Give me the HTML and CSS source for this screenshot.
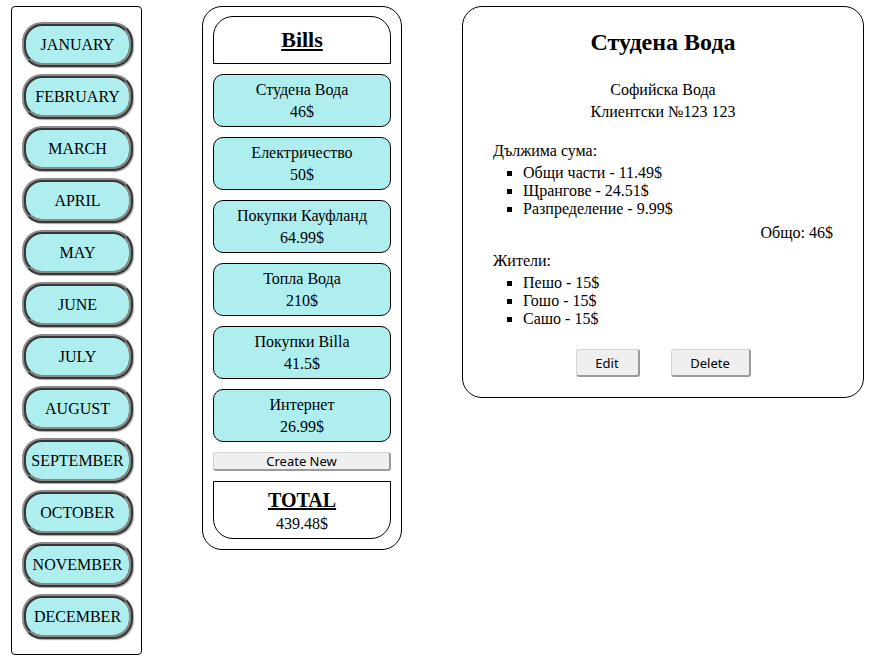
FILE: index.html
```html
<!DOCTYPE html>
<html>
<head>
<meta charset="utf-8">
<link rel="stylesheet" href="styles.css">
</head>
<body>
<div class="page">
  <nav class="months">
    <button class="month">JANUARY</button>
    <button class="month">FEBRUARY</button>
    <button class="month">MARCH</button>
    <button class="month">APRIL</button>
    <button class="month">MAY</button>
    <button class="month">JUNE</button>
    <button class="month">JULY</button>
    <button class="month">AUGUST</button>
    <button class="month">SEPTEMBER</button>
    <button class="month">OCTOBER</button>
    <button class="month">NOVEMBER</button>
    <button class="month">DECEMBER</button>
  </nav>

  <section class="bills">
    <div class="bills-head"><span class="bills-title">Bills</span></div>
    <div class="bill"><span>Студена Вода</span><span>46$</span></div>
    <div class="bill"><span>Електричество</span><span>50$</span></div>
    <div class="bill"><span>Покупки Кауфланд</span><span>64.99$</span></div>
    <div class="bill"><span>Топла Вода</span><span>210$</span></div>
    <div class="bill"><span>Покупки Billa</span><span>41.5$</span></div>
    <div class="bill"><span>Интернет</span><span>26.99$</span></div>
    <button class="sys-btn create">Create New</button>
    <div class="total">
      <span class="total-title">TOTAL</span>
      <span class="total-sum">439.48$</span>
    </div>
  </section>

  <section class="detail">
    <h2 class="detail-title">Студена Вода</h2>
    <div class="provider">Софийска Вода</div>
    <div class="provider">Клиентски №123 123</div>
    <div class="label label-due">Дължима сума:</div>
    <ul class="items">
      <li>Общи части - 11.49$</li>
      <li>Щрангове - 24.51$</li>
      <li>Разпределение - 9.99$</li>
    </ul>
    <div class="sum">Общо: 46$</div>
    <div class="label label-people">Жители:</div>
    <ul class="items">
      <li>Пешо - 15$</li>
      <li>Гошо - 15$</li>
      <li>Сашо - 15$</li>
    </ul>
    <div class="actions">
      <button class="sys-btn edit">Edit</button>
      <button class="sys-btn delete">Delete</button>
    </div>
  </section>
</div>
</body>
</html>
```

FILE: styles.css
```css
html, body {
  margin: 0;
  padding: 0;
  background: #fff;
}

body {
  font-family: "Liberation Serif", "Times New Roman", serif;
  font-size: 16px;
  color: #000;
}

.page {
  display: flex;
  align-items: flex-start;
  padding: 6px 0 0 11px;
}

/* months column */
.months {
  width: 131px;
  box-sizing: border-box;
  border: 1px solid #000;
  border-radius: 4px;
  padding: 15px 0 15px 10px;
  display: flex;
  flex-direction: column;
  gap: 7px;
}

.month {
  width: 111px;
  height: 45px;
  box-sizing: border-box;
  border: 4px ridge #8a8a8a;
  border-radius: 20px;
  background: #afeeee;
  font-family: "Liberation Serif", "Times New Roman", serif;
  font-size: 16px;
  color: #000;
  padding: 0;
  box-shadow: 1px 1px 1px rgba(0,0,0,0.35);
}

/* bills column */
.bills {
  margin-left: 60px;
  width: 200px;
  box-sizing: border-box;
  border: 1px solid #000;
  border-radius: 20px;
  padding: 9px 10px 10px 10px;
  display: flex;
  flex-direction: column;
  gap: 10px;
}

.bills-head {
  height: 48px;
  box-sizing: border-box;
  border: 1px solid #000;
  border-radius: 20px 20px 0 0;
  display: flex;
  align-items: center;
  justify-content: center;
}

.bills-title {
  font-weight: bold;
  font-size: 22px;
  text-decoration: underline;
}

.bill {
  height: 53px;
  box-sizing: border-box;
  border: 1px solid #000;
  border-radius: 10px;
  background: #afeeee;
  display: flex;
  flex-direction: column;
  align-items: center;
  justify-content: center;
  line-height: 22px;
}

.sys-btn {
  font-family: "Noto Sans", "Liberation Sans", sans-serif;
  font-size: 13px;
  color: #000;
  background: #efefef;
  border-style: solid;
  border-width: 1px 2px 2px 1px;
  border-color: #d4d4d4 #9a9a9a #9a9a9a #d4d4d4;
  border-radius: 3px;
  padding: 0;
  box-sizing: border-box;
}

.create {
  height: 19px;
  width: 100%;
  line-height: 15px;
}

.total {
  height: 58px;
  box-sizing: border-box;
  border: 1px solid #000;
  border-radius: 0 0 20px 20px;
  display: flex;
  flex-direction: column;
  align-items: center;
  padding-top: 7px;
}

.total-title {
  font-weight: bold;
  font-size: 20px;
  text-decoration: underline;
  line-height: 23px;
}

.total-sum {
  line-height: 20px;
  margin-top: 2px;
}

/* detail card */
.detail {
  margin-left: 60px;
  width: 402px;
  box-sizing: border-box;
  border: 1px solid #000;
  border-radius: 20px;
  padding: 21px 30px 20px 30px;
  line-height: 18px;
}

.detail-title {
  margin: 0;
  font-size: 24px;
  font-weight: bold;
  line-height: 28px;
  text-align: center;
}

.provider {
  text-align: center;
  line-height: 22px;
}

.detail-title + .provider {
  margin-top: 23px;
}

.label-due {
  margin-top: 19px;
}

.items {
  margin: 4px 0 0 0;
  padding-left: 30px;
  list-style: square;
}

.sum {
  text-align: right;
  margin-top: 6px;
}

.label-people {
  margin-top: 10px;
}

.actions {
  margin-top: 21px;
  display: flex;
  justify-content: center;
  gap: 31px;
}

.edit,
.delete {
  height: 28px;
}

.edit {
  width: 64px;
}

.delete {
  width: 80px;
}
```
